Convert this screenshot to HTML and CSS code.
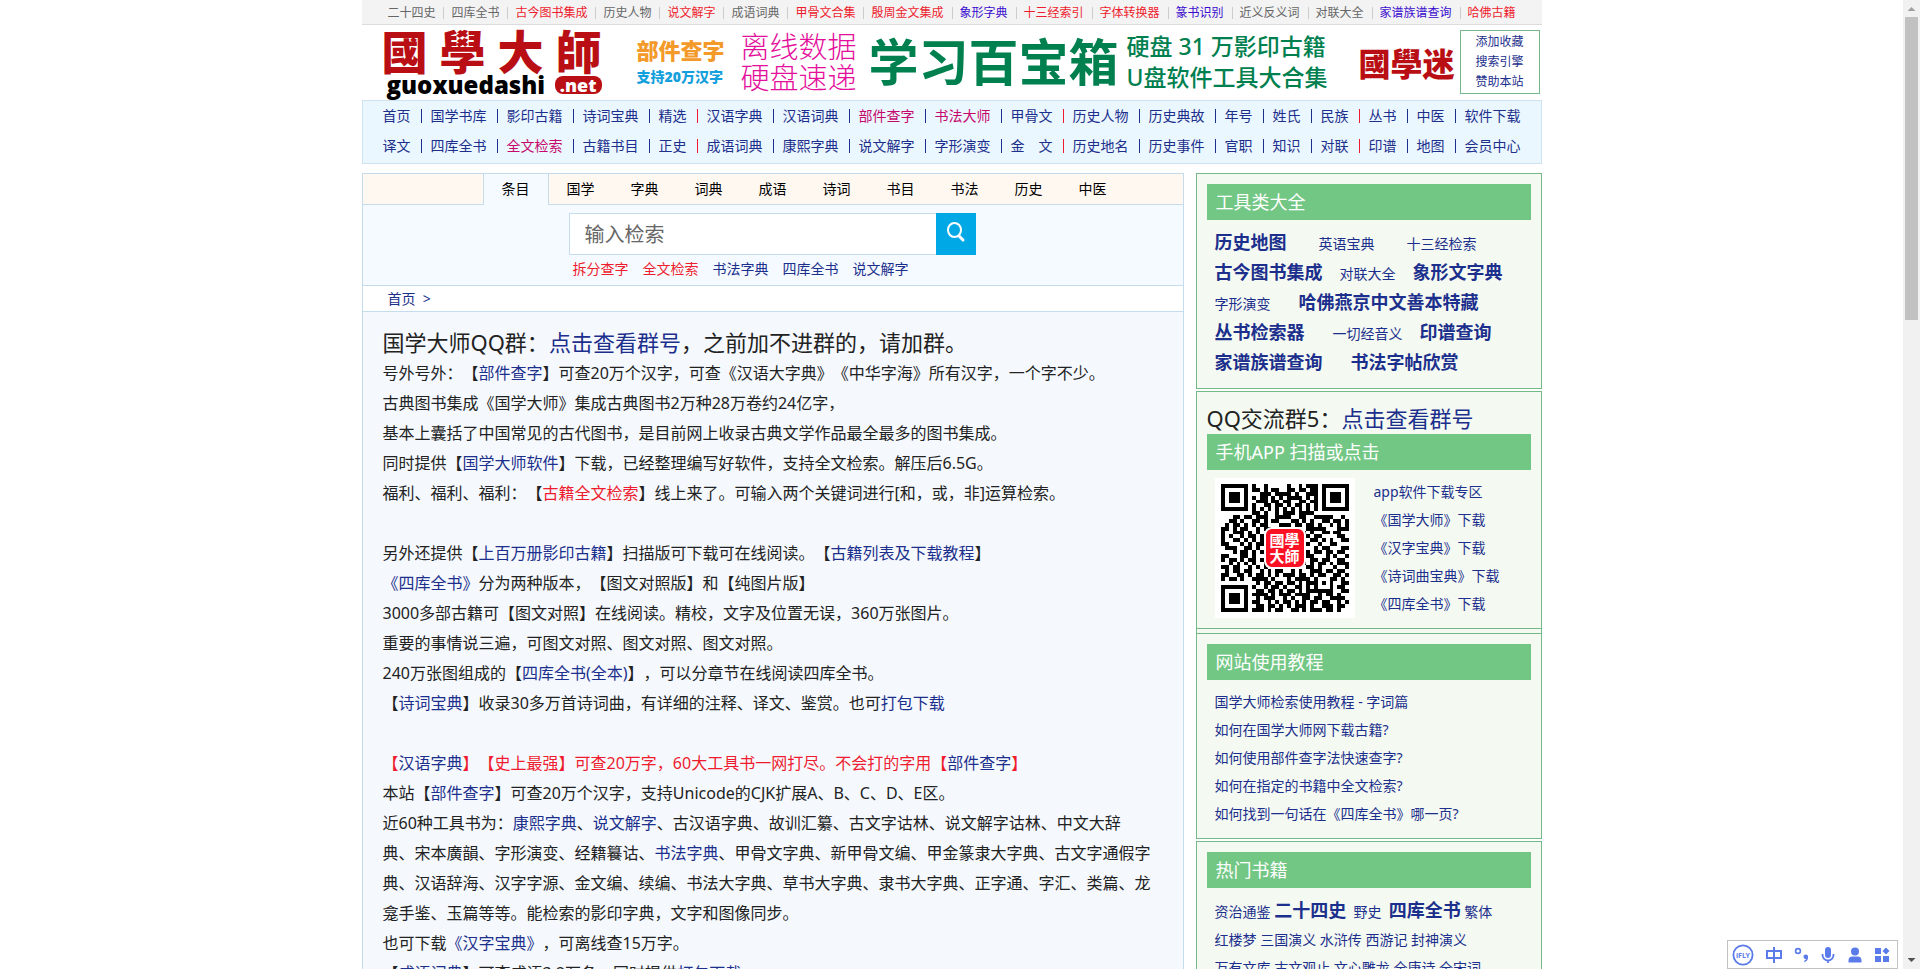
FILE: index.html
```html
<!DOCTYPE html>
<html lang="zh-CN">
<head>
    <meta charset="UTF-8">
    <meta name="viewport" content="width=device-width, initial-scale=1.0">
    <title>国学大师</title>
    <link rel="stylesheet" href="styles.css">
</head>
<body>
<div class="page">
    <div class="wrap">
        <ul class="topbar">
            <li><a href="#">二十四史</a></li>
            <li><a href="#">四库全书</a></li>
            <li><a href="#" class="red">古今图书集成</a></li>
            <li><a href="#">历史人物</a></li>
            <li><a href="#" class="red">说文解字</a></li>
            <li><a href="#">成语词典</a></li>
            <li><a href="#" class="red">甲骨文合集</a></li>
            <li><a href="#" class="red">殷周金文集成</a></li>
            <li><a href="#" class="violet">象形字典</a></li>
            <li><a href="#" class="red">十三经索引</a></li>
            <li><a href="#" class="red">字体转换器</a></li>
            <li><a href="#" class="violet">篆书识别</a></li>
            <li><a href="#">近义反义词</a></li>
            <li><a href="#">对联大全</a></li>
            <li><a href="#" class="violet">家谱族谱查询</a></li>
            <li><a href="#" class="red">哈佛古籍</a></li>
        </ul>

        <div class="header">
            <a href="#" class="logo">
                <span class="logo-cn"><span>國</span><span>學</span><span>大</span><span>師</span></span>
                <span class="logo-en">guoxuedashi<b>.net</b></span>
            </a>
            <a href="#" class="ad ad-parts"><span>部件查字</span><small>支持20万汉字</small></a>
            <a href="#" class="ad ad-offline"><span>离线数据</span><span>硬盘速递</span></a>
            <a href="#" class="ad ad-box">学习百宝箱</a>
            <a href="#" class="ad ad-disk"><span>硬盘 31 万影印古籍</span><span>U盘软件工具大合集</span></a>
            <a href="#" class="ad ad-fans">國學迷</a>
            <div class="quick">
                <a href="#">添加收藏</a>
                <a href="#">搜索引擎</a>
                <a href="#">赞助本站</a>
            </div>
        </div>

        <div class="nav">
            <ul>
                <li><a href="#">首页</a></li>
                <li><a href="#">国学书库</a></li>
                <li><a href="#">影印古籍</a></li>
                <li><a href="#">诗词宝典</a></li>
                <li><a href="#">精选</a></li>
                <li class="group"><a href="#">汉语字典</a></li>
                <li><a href="#">汉语词典</a></li>
                <li><a href="#" class="pink">部件查字</a></li>
                <li><a href="#" class="pink">书法大师</a></li>
                <li><a href="#">甲骨文</a></li>
                <li class="group"><a href="#">历史人物</a></li>
                <li><a href="#">历史典故</a></li>
                <li><a href="#">年号</a></li>
                <li><a href="#">姓氏</a></li>
                <li><a href="#">民族</a></li>
                <li class="group"><a href="#">丛书</a></li>
                <li><a href="#">中医</a></li>
                <li><a href="#">软件下载</a></li>
            </ul>
            <ul>
                <li><a href="#">译文</a></li>
                <li><a href="#">四库全书</a></li>
                <li><a href="#" class="pink">全文检索</a></li>
                <li><a href="#">古籍书目</a></li>
                <li><a href="#">正史</a></li>
                <li class="group"><a href="#">成语词典</a></li>
                <li><a href="#">康熙字典</a></li>
                <li><a href="#">说文解字</a></li>
                <li><a href="#">字形演变</a></li>
                <li><a href="#">金　文</a></li>
                <li class="group"><a href="#">历史地名</a></li>
                <li><a href="#">历史事件</a></li>
                <li><a href="#">官职</a></li>
                <li><a href="#">知识</a></li>
                <li><a href="#">对联</a></li>
                <li class="group"><a href="#">印谱</a></li>
                <li><a href="#">地图</a></li>
                <li><a href="#">会员中心</a></li>
            </ul>
        </div>

        <div class="columns">
            <div class="main">
                <ul class="tabs">
                    <li class="active"><a href="#">条目</a></li>
                    <li><a href="#">国学</a></li>
                    <li><a href="#">字典</a></li>
                    <li><a href="#">词典</a></li>
                    <li><a href="#">成语</a></li>
                    <li><a href="#">诗词</a></li>
                    <li><a href="#">书目</a></li>
                    <li><a href="#">书法</a></li>
                    <li><a href="#">历史</a></li>
                    <li><a href="#">中医</a></li>
                </ul>
                <div class="search">
                    <form class="search-form">
                        <input type="text" placeholder="输入检索" aria-label="输入检索">
                        <button type="button" aria-label="搜索">
                            <svg width="20" height="22" viewBox="0 0 20 22" fill="none" stroke="#fff">
                                <ellipse cx="8.5" cy="9" rx="6.5" ry="7" stroke-width="2"/>
                                <path d="M13 15l4 4" stroke-width="3" stroke-linecap="round"/>
                            </svg>
                        </button>
                    </form>
                    <div class="search-links">
                        <a href="#" class="red">拆分查字</a>
                        <a href="#" class="red">全文检索</a>
                        <a href="#">书法字典</a>
                        <a href="#">四库全书</a>
                        <a href="#">说文解字</a>
                    </div>
                </div>
                <div class="crumb"><a href="#">首页</a>&nbsp; &gt;</div>
                <div class="content">
                    <p class="big">国学大师QQ群：<a href="#">点击查看群号</a>，之前加不进群的，请加群。</p>
                    <p>号外号外：【<a href="#">部件查字</a>】可查20万个汉字，可查《汉语大字典》《中华字海》所有汉字，一个字不少。</p>
                    <p>古典图书集成《国学大师》集成古典图书2万种28万卷约24亿字，</p>
                    <p>基本上囊括了中国常见的古代图书，是目前网上收录古典文学作品最全最多的图书集成。</p>
                    <p>同时提供【<a href="#">国学大师软件</a>】下载，已经整理编写好软件，支持全文检索。解压后6.5G。</p>
                    <p>福利、福利、福利：【<a href="#" class="red">古籍全文检索</a>】线上来了。可输入两个关键词进行[和，或，非]运算检索。</p>
                    <br>
                    <p>另外还提供【<a href="#">上百万册影印古籍</a>】扫描版可下载可在线阅读。【<a href="#">古籍列表及下载教程</a>】</p>
                    <p><a href="#">《四库全书》</a>分为两种版本，【图文对照版】和【纯图片版】</p>
                    <p>3000多部古籍可【图文对照】在线阅读。精校，文字及位置无误，360万张图片。</p>
                    <p>重要的事情说三遍，可图文对照、图文对照、图文对照。</p>
                    <p>240万张图组成的【<a href="#">四库全书(全本)</a>】，可以分章节在线阅读四库全书。</p>
                    <p>【<a href="#">诗词宝典</a>】收录30多万首诗词曲，有详细的注释、译文、鉴赏。也可<a href="#">打包下载</a></p>
                    <br>
                    <p class="red">【<a href="#">汉语字典</a>】【史上最强】可查20万字，60大工具书一网打尽。不会打的字用【<a href="#">部件查字</a>】</p>
                    <p>本站【<a href="#">部件查字</a>】可查20万个汉字，支持Unicode的CJK扩展A、B、C、D、E区。</p>
                    <p>近60种工具书为：<a href="#">康熙字典</a>、<a href="#">说文解字</a>、古汉语字典、故训汇纂、古文字诂林、说文解字诂林、中文大辞典、宋本廣韻、字形演变、经籍籑诂、<a href="#">书法字典</a>、甲骨文字典、新甲骨文编、甲金篆隶大字典、古文字通假字典、汉语辞海、汉字字源、金文编、续编、书法大字典、草书大字典、隶书大字典、正字通、字汇、类篇、龙龛手鉴、玉篇等等。能检索的影印字典，文字和图像同步。</p>
                    <p>也可下载<a href="#">《汉字宝典》</a>，可离线查15万字。</p>
                    <p>【<a href="#">成语词典</a>】可查成语3.2万条，同时提供<a href="#">打包下载</a></p>
                </div>
            </div>

            <div class="side">
                <div class="box">
                    <h2>工具类大全</h2>
                    <div class="tools">
                        <p><a href="#" class="hot">历史地图</a><a href="#" class="sp-l">英语宝典</a><a href="#" class="sp-l">十三经检索</a></p>
                        <p><a href="#" class="hot">古今图书集成</a><a href="#" class="sp-s">对联大全</a><a href="#" class="hot sp-s">象形文字典</a></p>
                        <p><a href="#">字形演变</a><a href="#" class="hot sp-m">哈佛燕京中文善本特藏</a></p>
                        <p><a href="#" class="hot">丛书检索器</a><a href="#" class="sp-m">一切经音义</a><a href="#" class="hot sp-s">印谱查询</a></p>
                        <p><a href="#" class="hot">家谱族谱查询</a><a href="#" class="hot sp-m">书法字帖欣赏</a></p>
                    </div>
                </div>

                <div class="box box-app">
                    <div class="box-app-inner">
                        <p class="big">QQ交流群5：<a href="#">点击查看群号</a></p>
                        <h2>手机APP 扫描或点击</h2>
                        <div class="app">
                            <div class="qr">
                                <svg id="qr" viewBox="0 0 33 33" shape-rendering="crispEdges"></svg>
                                <div class="qr-logo">國學<br>大師</div>
                            </div>
                            <ul class="links">
                                <li><a href="#">app软件下载专区</a></li>
                                <li><a href="#">《国学大师》下载</a></li>
                                <li><a href="#">《汉字宝典》下载</a></li>
                                <li><a href="#">《诗词曲宝典》下载</a></li>
                                <li><a href="#">《四库全书》下载</a></li>
                            </ul>
                        </div>
                    </div>
                </div>

                <div class="box">
                    <h2>网站使用教程</h2>
                    <ul class="links guide">
                        <li><a href="#">国学大师检索使用教程 - 字词篇</a></li>
                        <li><a href="#">如何在国学大师网下载古籍?</a></li>
                        <li><a href="#">如何使用部件查字法快速查字?</a></li>
                        <li><a href="#">如何在指定的书籍中全文检索?</a></li>
                        <li><a href="#">如何找到一句话在《四库全书》哪一页?</a></li>
                    </ul>
                </div>

                <div class="box">
                    <h2>热门书籍</h2>
                    <div class="books">
                        <p><a href="#">资治通鉴</a> <a href="#" class="hot">二十四史</a>&nbsp; <a href="#">野史</a>&nbsp; <a href="#" class="hot">四库全书</a> <a href="#">繁体</a></p>
                        <p><a href="#">红楼梦</a> <a href="#">三国演义</a> <a href="#">水浒传</a> <a href="#">西游记</a> <a href="#">封神演义</a></p>
                        <p><a href="#">万有文库</a> <a href="#">古文观止</a> <a href="#">文心雕龙</a> <a href="#">全唐诗</a> <a href="#">全宋词</a></p>
                    </div>
                </div>
            </div>
        </div>
    </div>
</div>

<div class="ime">
    <svg width="22" height="22" viewBox="0 0 22 22"><circle cx="11" cy="11" r="9.6" fill="none" stroke="#5b7bea" stroke-width="1.8"/><text x="11" y="14" text-anchor="middle" class="ime-text">iFLY</text></svg>
    <svg width="18" height="18" viewBox="0 0 18 18" fill="none" stroke="#5b7bea" stroke-width="2"><path d="M2 5h14v7H2zM9 1v16"/></svg>
    <svg width="16" height="16" viewBox="0 0 16 16"><circle cx="4" cy="4" r="2.4" fill="none" stroke="#5b7bea" stroke-width="1.6"/><path d="M11.500 7.500a2.600 2.600 0 0 1 2.600 2.800c0 2.600-1.600 4.300-3.800 4.900v-1.400c1-.4 1.600-1 1.700-1.700a2.300 2.300 0 0 1-.5-4.600z" fill="#5b7bea"/></svg>
    <svg width="16" height="18" viewBox="0 0 16 18"><rect x="5" y="1" width="6" height="11" rx="3" fill="#5b7bea"/><path d="M2.500 8v1a5.500 5.500 0 0 0 11 0V8M8 14v3" fill="none" stroke="#5b7bea" stroke-width="1.800"/></svg>
    <svg width="16" height="16" viewBox="0 0 16 16" fill="#5b7bea"><circle cx="8" cy="4.500" r="4"/><path d="M1.500 15.500v-2a4 4 0 0 1 4-4h5a4 4 0 0 1 4 4v2z"/></svg>
    <svg width="16" height="16" viewBox="0 0 16 16" fill="#5b7bea"><path d="M1 1h6v6H1zM1 9h6v6H1zM9 9h6v6H9zM12 .5L15.500 4 12 7.500 8.500 4z"/></svg>
</div>

<div class="scrollbar">
    <span class="arrow up"></span>
    <span class="thumb"></span>
    <span class="arrow down"></span>
</div>

<script src="script.js"></script>
</body>
</html>
```
FILE: styles.css
```css
* {
    box-sizing: border-box;
}
body {
    margin: 0;
    background: #fff;
    color: #222;
    font-family: "Noto Sans", "Noto Sans CJK SC", sans-serif;
    font-size: 14px;
    text-spacing-trim: space-all;
}
ul, p, h2 {
    margin: 0;
    padding: 0;
    list-style: none;
}
a {
    color: #1c2f8c;
    text-decoration: none;
}
.red, a.red {
    color: #ee1c2e;
}
a.pink {
    color: #c4086c;
}
a.violet {
    color: #3a0ccf;
}
.page {
    height: 100vh;
    overflow: hidden;
    padding-right: 17px;
}
.wrap {
    max-width: 1180px;
    margin: 0 auto;
}

/* top links */
.topbar {
    display: flex;
    justify-content: center;
    align-items: center;
    height: 25px;
    padding-top: 2px;
    background: #f3f3f3;
    border-bottom: 1px solid #dcdcdc;
    font-size: 12px;
    line-height: 12px;
    white-space: nowrap;
}
.topbar li + li {
    margin-left: 8px;
    padding-left: 7px;
    border-left: 1px solid #ccc;
}
.topbar a {
    color: #666;
}
.topbar a.red {
    color: #ee1c2e;
}
.topbar a.violet {
    color: #3a0ccf;
}

/* logo and banners */
.header {
    display: flex;
    align-items: center;
    height: 75px;
    padding: 0 2px 2px 20px;
    white-space: nowrap;
}
.logo {
    width: 220px;
    margin-right: 35px;
}
.logo-cn {
    display: flex;
    justify-content: space-between;
    color: #b90f14;
    font-size: 46px;
    font-weight: 900;
    line-height: 46px;
}
.logo-en {
    display: flex;
    justify-content: space-between;
    align-items: center;
    padding-left: 5px;
    color: #000;
    font: 800 24px/22px "Open Sans", "Noto Sans", sans-serif;
}
.logo-en b {
    padding: 0 5px;
    border-radius: 8px;
    background: #b90f14;
    color: #fff;
    font-size: 18px;
    line-height: 18px;
}
.ad span, .ad small {
    display: block;
}
.ad-parts {
    width: 104px;
    color: #f39a2b;
    font-size: 22px;
    font-weight: 900;
    line-height: 30px;
}
.ad-parts small {
    color: #14a0dc;
    font-size: 14px;
    line-height: 24px;
}
.ad-offline {
    width: 128px;
    color: #e4109c;
    font-size: 29px;
    font-weight: 300;
    line-height: 31px;
}
.ad-box {
    width: 258px;
    color: #00804f;
    font-size: 50px;
    font-weight: 700;
    line-height: 60px;
}
.ad-disk {
    width: 232px;
    color: #00804f;
    font-size: 23px;
    font-weight: 500;
    line-height: 31px;
}
.ad-fans {
    color: #b90f14;
    font-size: 32px;
    font-weight: 900;
}
.quick {
    width: 80px;
    margin-left: auto;
    padding: 1px 0;
    border: 1px solid #74b987;
    font-size: 12px;
    line-height: 20px;
    text-align: center;
}
.quick a {
    display: block;
}

/* main menu */
.nav {
    padding: 0 20px 2px;
    border: 1px solid #cfe2ef;
    background: #ebf7ff;
}
.nav ul {
    display: flex;
    align-items: center;
    height: 30px;
    line-height: 14px;
    white-space: nowrap;
}
.nav li + li {
    margin-left: 10px;
    padding-left: 9px;
    border-left: 1px solid #1c2f8c;
}
.nav li.group {
    border-left-color: #ee1c2e;
}

.columns {
    display: flex;
    align-items: flex-start;
    justify-content: space-between;
    margin-top: 9px;
}
.main {
    width: 822px;
    border: 1px solid #c5dcec;
    background: #f5f9fe;
}
.tabs {
    display: flex;
    background: #fef8f0;
    line-height: 30px;
    text-align: center;
}
.tabs::before {
    content: "";
    width: 120px;
    border-bottom: 1px solid #c5dcec;
}
.tabs::after {
    content: "";
    flex: 1;
    border-bottom: 1px solid #c5dcec;
}
.tabs li {
    width: 64px;
    border-bottom: 1px solid #c5dcec;
}
.tabs li.active {
    width: 66px;
    border: 1px solid #c5dcec;
    border-width: 0 1px;
    background: #f4faff;
}
.tabs a {
    color: #000;
}
.search {
    padding: 8px 0 0 206px;
    border-bottom: 1px solid #c5dcec;
    background: #f4faff;
}
.search-form {
    display: flex;
    width: 407px;
    height: 42px;
}
.search-form input {
    flex: 1;
    min-width: 0;
    padding: 0 15px;
    border: 1px solid #c5dcec;
    border-right: 0;
    background: #fff;
    font: 20px "Noto Sans", "Noto Sans CJK SC", sans-serif;
}
.search-form input::placeholder {
    color: #666;
}
.search-form button {
    width: 40px;
    padding: 0 0 4px;
    border: 0;
    background: #00a8e6;
    cursor: pointer;
}
.search-form svg {
    display: block;
    margin: 0 auto;
}
.search-links {
    display: flex;
    gap: 14px;
    padding: 0 0 2px 4px;
    line-height: 28px;
}
.crumb {
    padding-left: 25px;
    border-bottom: 1px solid #c5dcec;
    background: #fff;
    color: #1c2f8c;
    line-height: 25px;
}
.content {
    padding: 16px 31px 20px 20px;
    font-size: 16px;
    line-height: 30px;
}
.big {
    padding-bottom: 2px;
    font-size: 22px;
    line-height: 28px;
}

/* right column */
.side {
    width: 346px;
}
.box {
    margin-bottom: 2px;
    padding: 10px;
    border: 1px solid #74b987;
    background: #f4faf2;
}
.box h2 {
    padding-left: 9px;
    background: #73c785;
    color: #fff;
    font-size: 18px;
    font-weight: normal;
    line-height: 36px;
}
.tools, .guide, .books {
    padding: 8px 0 0 8px;
    white-space: nowrap;
}
.tools p {
    display: flex;
    align-items: baseline;
    height: 30px;
    line-height: 28px;
}
.hot {
    font-size: 18px;
    font-weight: bold;
}
.sp-s {
    margin-left: 17px;
}
.sp-m {
    margin-left: 28px;
}
.sp-l {
    margin-left: 32px;
}
.box-app {
    margin-bottom: 0;
    padding: 0 0 4px;
    border-bottom: 0;
}
.box-app-inner {
    padding: 12px 10px 10px;
    border-bottom: 1px solid #74b987;
}
.app {
    display: flex;
    gap: 19px;
    padding: 8px 0 0 8px;
}
.qr {
    position: relative;
    width: 140px;
    height: 140px;
    padding: 6px;
    background: #fff;
}
.qr svg {
    display: block;
    width: 128px;
    height: 128px;
}
.qr-logo {
    position: absolute;
    top: 49px;
    left: 49px;
    width: 42px;
    height: 42px;
    padding-top: 3px;
    border: 2px solid #fff;
    border-radius: 8px;
    background: #fb1024;
    color: #fff;
    font-size: 15px;
    font-weight: bold;
    line-height: 16px;
    text-align: center;
}
.links {
    line-height: 28px;
}
.books {
    line-height: 28px;
}

/* input method bar */
.ime {
    position: fixed;
    right: 22px;
    bottom: 0;
    display: flex;
    align-items: center;
    justify-content: space-between;
    width: 171px;
    height: 29px;
    padding: 0 7px 0 4px;
    border: 1px solid #c3c3c3;
    background: #fff;
}
.ime-text {
    fill: #5b7bea;
    font: bold 7px "Noto Sans", sans-serif;
}

.scrollbar {
    position: fixed;
    top: 0;
    right: 0;
    bottom: 0;
    display: flex;
    flex-direction: column;
    align-items: center;
    width: 17px;
    background: #f1f1f1;
}
.thumb {
    width: 13px;
    height: 31.25vh;
    background: #c1c1c1;
}
.arrow {
    width: 8px;
    height: 4px;
    margin: 7px 0 6px;
    background: #a0a0a0;
    clip-path: polygon(50% 0, 100% 100%, 0 100%);
}
.arrow.down {
    margin: auto 0 7px;
    background: #505050;
    clip-path: polygon(0 0, 100% 0, 50% 100%);
}
```
FILE: script.js
```js
// QR modules, one string per row
const rows = [
    '#######.#..#.....#..#.###.#######',
    '#.....#.##.#.##..##.##.##.#.....#',
    '#.###.#...###.####.#..###.#.###.#',
    '#.###.#.#.##.#.#.####.#.#.#.###.#',
    '#.###.#..###.##.##..##.##.#.###.#',
    '#.....#.#..##.##.#.##.#.#.#.....#',
    '#######.#.#.#.#.#.#.#.#.#.#######',
    '........##.#..#.###.####.........',
    '...##.##.###..####..##..#####..#.',
    '..##.#..##.#.##...##.#.#..##.##.#',
    '.#.##.#.#.##...###.##.##.#..#.#.#',
    '##.#.##..#.##.#....#..#####...###',
    '#..###.#.#..#........#.#..##.##..',
    '#.#..#.##.#.#.........#.##....##.',
    '#..##.#.#.##...........##.#.#..##',
    '##...#.#.##.#.........#..#..##...',
    '.###..##.#.#............#.##...##',
    '...#.##.#.##..........#.##.##.##.',
    '##...##.#..#..........##...#.#..#',
    '#.##.#.##.#.#........#.##.##..##.',
    '..#.#.#.#..##........#.#.##.#.###',
    '##.##..#.#.#.##.#.##..##.#...#..#',
    '.#.##.##..#.#.##..#.#..###.##.##.',
    '##..##.#.##.#.#.###.##.#.##..##.#',
    '#.##.#..####.#...#.####.#...##.#.',
    '.........#.##.##.##.#.###.#.#..##',
    '#######.#..#.##.#..##.#.#...#.##.',
    '#.....#..##.##.#.##.#.#######..##',
    '#.###.#.####.#.###.####..#.##.#..',
    '#.###.#..#.###..#.#..##.##..####.',
    '#.###.#.##..#.#.##.#.#.##.##..#.#',
    '#.....#..##.##.#.#.###.#..###.##.',
    '#######.###.#.##..##.#.###.##.#..'
];

let d = '';
rows.forEach((row, y) => {
    [...row].forEach((cell, x) => {
        if (cell === '#') d += `M${x} ${y}h1v1h-1z`;
    });
});

const path = document.createElementNS('http://www.w3.org/2000/svg', 'path');
path.setAttribute('d', d);
document.getElementById('qr').appendChild(path);
```
